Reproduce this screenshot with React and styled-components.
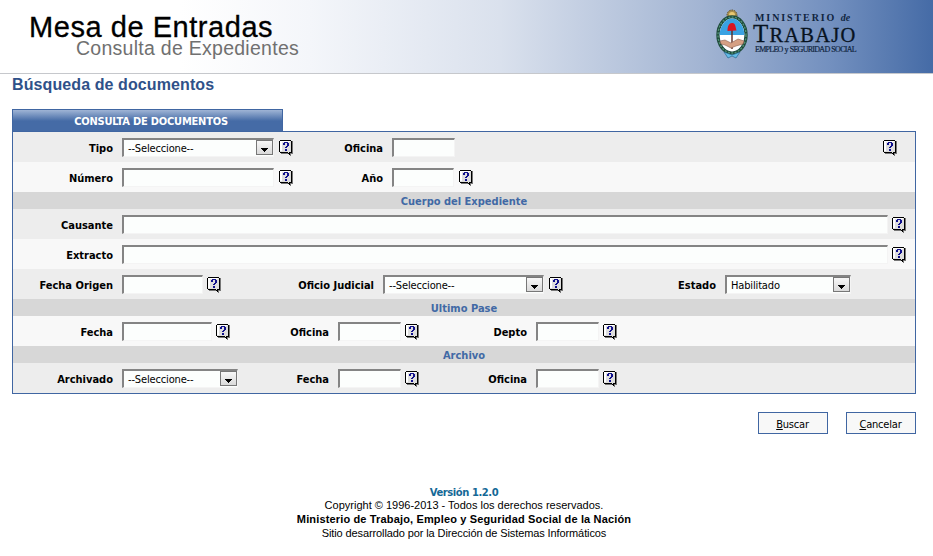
import React from "react";
import styled, { createGlobalStyle } from "styled-components";

const tahoma = `"DejaVu Sans Condensed", "DejaVu Sans", sans-serif`;

const GlobalStyle = createGlobalStyle`
  * { box-sizing: border-box; }
  body { margin: 0; background: #fff; color: #000; font: 11px "Liberation Sans", Arial, sans-serif; }
`;

const Page = styled.div`
  width: 933px;
  height: 556px;
  overflow: hidden;
  display: flex;
  flex-direction: column;
`;

const Header = styled.header`
  height: 74px;
  flex: none;
  display: flex;
  border-bottom: 1px solid #c6c8cc;
  background: linear-gradient(90deg, #fff 0, #fff 180px, #f4f6fa 310px, #dae1ed 500px, #a3b5d3 700px, #7390bf 830px, #456ba6 933px);
`;

const Titles = styled.div`
  width: 715px;
  padding: 12px 0 0 29px;
`;

const Title = styled.div`
  font-size: 29px;
  line-height: 30px;
  white-space: nowrap;
  letter-spacing: 0.55px;
  -webkit-text-stroke: 0.3px #000;
`;

const Subtitle = styled.div`
  padding-left: 47px;
  margin-top: -4px;
  font-size: 19.5px;
  line-height: 20px;
  color: #707070;
  letter-spacing: 0.27px;
  white-space: nowrap;
`;

const Ministry = styled.div`
  display: flex;
  flex-direction: column;
  padding: 12px 0 0 4px;
  width: 120px;
  font-family: "Liberation Serif", serif;
  color: #10253f;
  white-space: nowrap;
`;

const MinistryTop = styled.div`
  font-size: 10px;
  line-height: 12px;
  font-weight: bold;
  letter-spacing: 1.9px;
  padding-left: 2px;
  i { letter-spacing: 0; }
`;

const MinistryName = styled.div`
  font-size: 20.5px;
  line-height: 20px;
  color: #08131f;
  letter-spacing: 1.2px;
  -webkit-text-stroke: 0.3px #08131f;
  &::first-letter { font-size: 25px; }
`;

const MinistrySub = styled.div`
  font-size: 8px;
  line-height: 9px;
  letter-spacing: -0.72px;
  word-spacing: 0.6px;
  padding-left: 2px;
  -webkit-text-stroke: 0.2px #10253f;
`;

const Crest = styled.svg`
  width: 34px;
  height: 52px;
  margin-top: 8px;
  flex: none;
`;

const PageTitle = styled.h1`
  margin: 0;
  padding-left: 12px;
  height: 35px;
  font-size: 16px;
  line-height: 21px;
  letter-spacing: 0.1px;
  color: #2f5189;
`;

const Tab = styled.div`
  margin-left: 12px;
  width: 271px;
  height: 22px;
  border: 1px solid #4066a2;
  border-bottom: 0;
  background: linear-gradient(#9fb4d5, #456ba6 11px);
  color: #fff;
  text-align: center;
  padding-left: 7px;
  font: bold 11px/23px ${tahoma};
  letter-spacing: -0.2px;
`;

const Panel = styled.form`
  margin: 0 0 0 12px;
  width: 904px;
  border: 1px solid #4066a2;
  font: 11px ${tahoma};
`;

const Row = styled.div`
  height: 30px;
  display: flex;
  padding-top: 6px;
  background: ${(p) => (p.$light ? "#f8f8f8" : "#ededed")};
`;

const Section = styled.div`
  height: 17px;
  background: #d7d7d7;
  color: #4169a5;
  text-align: center;
  font-weight: bold;
  line-height: 19px;
`;

const Label = styled.label`
  width: ${(p) => p.$w}px;
  flex: none;
  text-align: right;
  font-weight: bold;
  line-height: 21px;
  white-space: nowrap;
`;

const Box = styled.div`
  width: ${(p) => p.$w}px;
  height: 19px;
  flex: none;
  margin-left: 9px;
  display: flex;
  border: 2px solid #848484;
  border-right: 1px solid #f4f4f4;
  border-bottom: 1px solid #f4f4f4;
  background: #fcfefd;
`;

const Value = styled.span`
  flex: 1;
  padding-left: 4px;
  line-height: 17px;
  letter-spacing: -0.15px;
`;

const ArrowButton = styled.span`
  width: 17px;
  height: 15px;
  border: 1px solid #777;
  background: linear-gradient(#f7f7f7, #dadada);
  display: flex;
  justify-content: center;
  align-items: flex-end;
  padding-bottom: 2px;
`;

const HelpSvg = styled.svg`
  width: 15px;
  height: 16px;
  flex: none;
  margin: 2px 0 0 ${(p) => p.$gap}px;
`;

const Buttons = styled.div`
  display: flex;
  gap: 18px;
  margin: 18px 0 0 758px;
`;

const Button = styled.button`
  width: 70px;
  height: 22px;
  padding: 2px 1px 0 0;
  border: 1px solid #4066a2;
  background: #f8f8f8;
  color: #000;
  font: 11px ${tahoma};
  letter-spacing: -0.2px;
`;

const Footer = styled.footer`
  width: 928px;
  margin-top: 52px;
  text-align: center;
  line-height: 14px;
`;

const Version = styled.div`
  font: bold 10px/14px "DejaVu Sans", sans-serif;
  height: 12px;
  color: #146896;
  letter-spacing: -0.45px;
`;

const FootLine = styled.div`
  font-weight: ${(p) => (p.$bold ? "bold" : "normal")};
  letter-spacing: ${(p) => p.$ls || 0}px;
`;

function Help({ gap = 5 }) {
  return (
    <HelpSvg $gap={gap} viewBox="0 0 15 16" shapeRendering="crispEdges">
      <path d="M2 1H14V14H12V16H11V14H2Z" fill="#777" />
      <path d="M1 0H12V1H13V13H11V15H10V14H9V13H1V12H0V1H1Z" fill="#000" />
      <path d="M1 1H12V12H10V13H9V12H1Z" fill="#dedede" />
      <path d="M1 1H11V2H3V11H1Z" fill="#fff" />
      <path d="M5 2H9V3H5Z M4 3H6V5H4Z M8 3H10V6H8Z M7 6H9V7H7Z M6 7H8V8H6Z M6 9H8V11H6Z" fill="#10108c" />
    </HelpSvg>
  );
}

function Select({ w, children }) {
  return (
    <Box $w={w}>
      <Value>{children}</Value>
      <ArrowButton>
        <svg width="7" height="4" shapeRendering="crispEdges">
          <path d="M0 0H7V1H6V2H5V3H4V4H3V3H2V2H1V1H0Z" />
        </svg>
      </ArrowButton>
    </Box>
  );
}

function CoatOfArms() {
  return (
    <Crest viewBox="0 0 34 52">
      <circle cx="17" cy="7" r="5" fill="#a98e4c" stroke="#5d5130" strokeDasharray="1.5 1" />
      <circle cx="17" cy="7" r="3" fill="#e8c872" />
      <ellipse cx="17" cy="27" rx="14" ry="18" fill="none" stroke="#1e4a3a" strokeWidth="3.4" />
      <ellipse cx="17" cy="27" rx="14" ry="18" fill="none" stroke="#4f8f74" strokeWidth="1.4" strokeDasharray="2 1.4" />
      <ellipse cx="17" cy="27" rx="12.3" ry="16.4" fill="#fff" />
      <path d="M4.7 27A12.3 16.4 0 0 1 29.3 27Z" fill="#3aa2e2" />
      <path d="M17 22V41" stroke="#5b2a23" strokeWidth="1.4" />
      <path d="M12.5 23C12.5 18 14 15 17 15C20.5 14.5 20.5 19 21.5 22.5Z" fill="#d81622" />
      <path d="M5 33L10 32L16 35L23 31L29 33L28 36L21 38L16 40L10 37L6 36Z" fill="#d5a084" stroke="#8a6050" strokeWidth=".6" />
      <path d="M9 44L17 47L25 44L21 50L17 48L13 50Z" fill="#64bce8" stroke="#286890" strokeWidth=".7" />
    </Crest>
  );
}

export default function App() {
  return (
    <Page>
      <GlobalStyle />
      <Header>
        <Titles>
          <Title>Mesa de Entradas</Title>
          <Subtitle>Consulta de Expedientes</Subtitle>
        </Titles>
        <CoatOfArms />
        <Ministry>
          <MinistryTop>MINISTERIO <i>de</i></MinistryTop>
          <MinistryName>TRABAJO</MinistryName>
          <MinistrySub>EMPLEO y SEGURIDAD SOCIAL</MinistrySub>
        </Ministry>
      </Header>
      <PageTitle>Búsqueda de documentos</PageTitle>
      <Tab>CONSULTA DE DOCUMENTOS</Tab>
      <Panel>
        <Row>
          <Label $w={100}>Tipo</Label><Select w={152}>--Seleccione--</Select><Help />
          <Label $w={89}>Oficina</Label><Box $w={63} /><Help gap={428} />
        </Row>
        <Row $light>
          <Label $w={100}>Número</Label><Box $w={152} /><Help />
          <Label $w={89}>Año</Label><Box $w={62} /><Help />
        </Row>
        <Section>Cuerpo del Expediente</Section>
        <Row><Label $w={100}>Causante</Label><Box $w={766} /><Help gap={4} /></Row>
        <Row $light><Label $w={100}>Extracto</Label><Box $w={766} /><Help gap={4} /></Row>
        <Row>
          <Label $w={100}>Fecha Origen</Label><Box $w={81} /><Help gap={4} />
          <Label $w={152}>Oficio Judicial</Label><Select w={161}>--Seleccione--</Select><Help />
          <Label $w={152}>Estado</Label><Select w={126}>Habilitado</Select>
        </Row>
        <Section>Ultimo Pase</Section>
        <Row $light>
          <Label $w={100}>Fecha</Label><Box $w={90} /><Help gap={4} />
          <Label $w={98}>Oficina</Label><Box $w={63} /><Help gap={4} />
          <Label $w={107}>Depto</Label><Box $w={63} /><Help gap={4} />
        </Row>
        <Section>Archivo</Section>
        <Row>
          <Label $w={100}>Archivado</Label><Select w={116}>--Seleccione--</Select>
          <Label $w={91}>Fecha</Label><Box $w={63} /><Help gap={4} />
          <Label $w={107}>Oficina</Label><Box $w={63} /><Help gap={4} />
        </Row>
      </Panel>
      <Buttons>
        <Button><u>B</u>uscar</Button>
        <Button><u>C</u>ancelar</Button>
      </Buttons>
      <Footer>
        <Version>Versión 1.2.0</Version>
        <FootLine>Copyright © 1996-2013 - Todos los derechos reservados.</FootLine>
        <FootLine $bold $ls={0.15}>Ministerio de Trabajo, Empleo y Seguridad Social de la Nación</FootLine>
        <FootLine $ls={-0.11}>Sitio desarrollado por la Dirección de Sistemas Informáticos</FootLine>
      </Footer>
    </Page>
  );
}
